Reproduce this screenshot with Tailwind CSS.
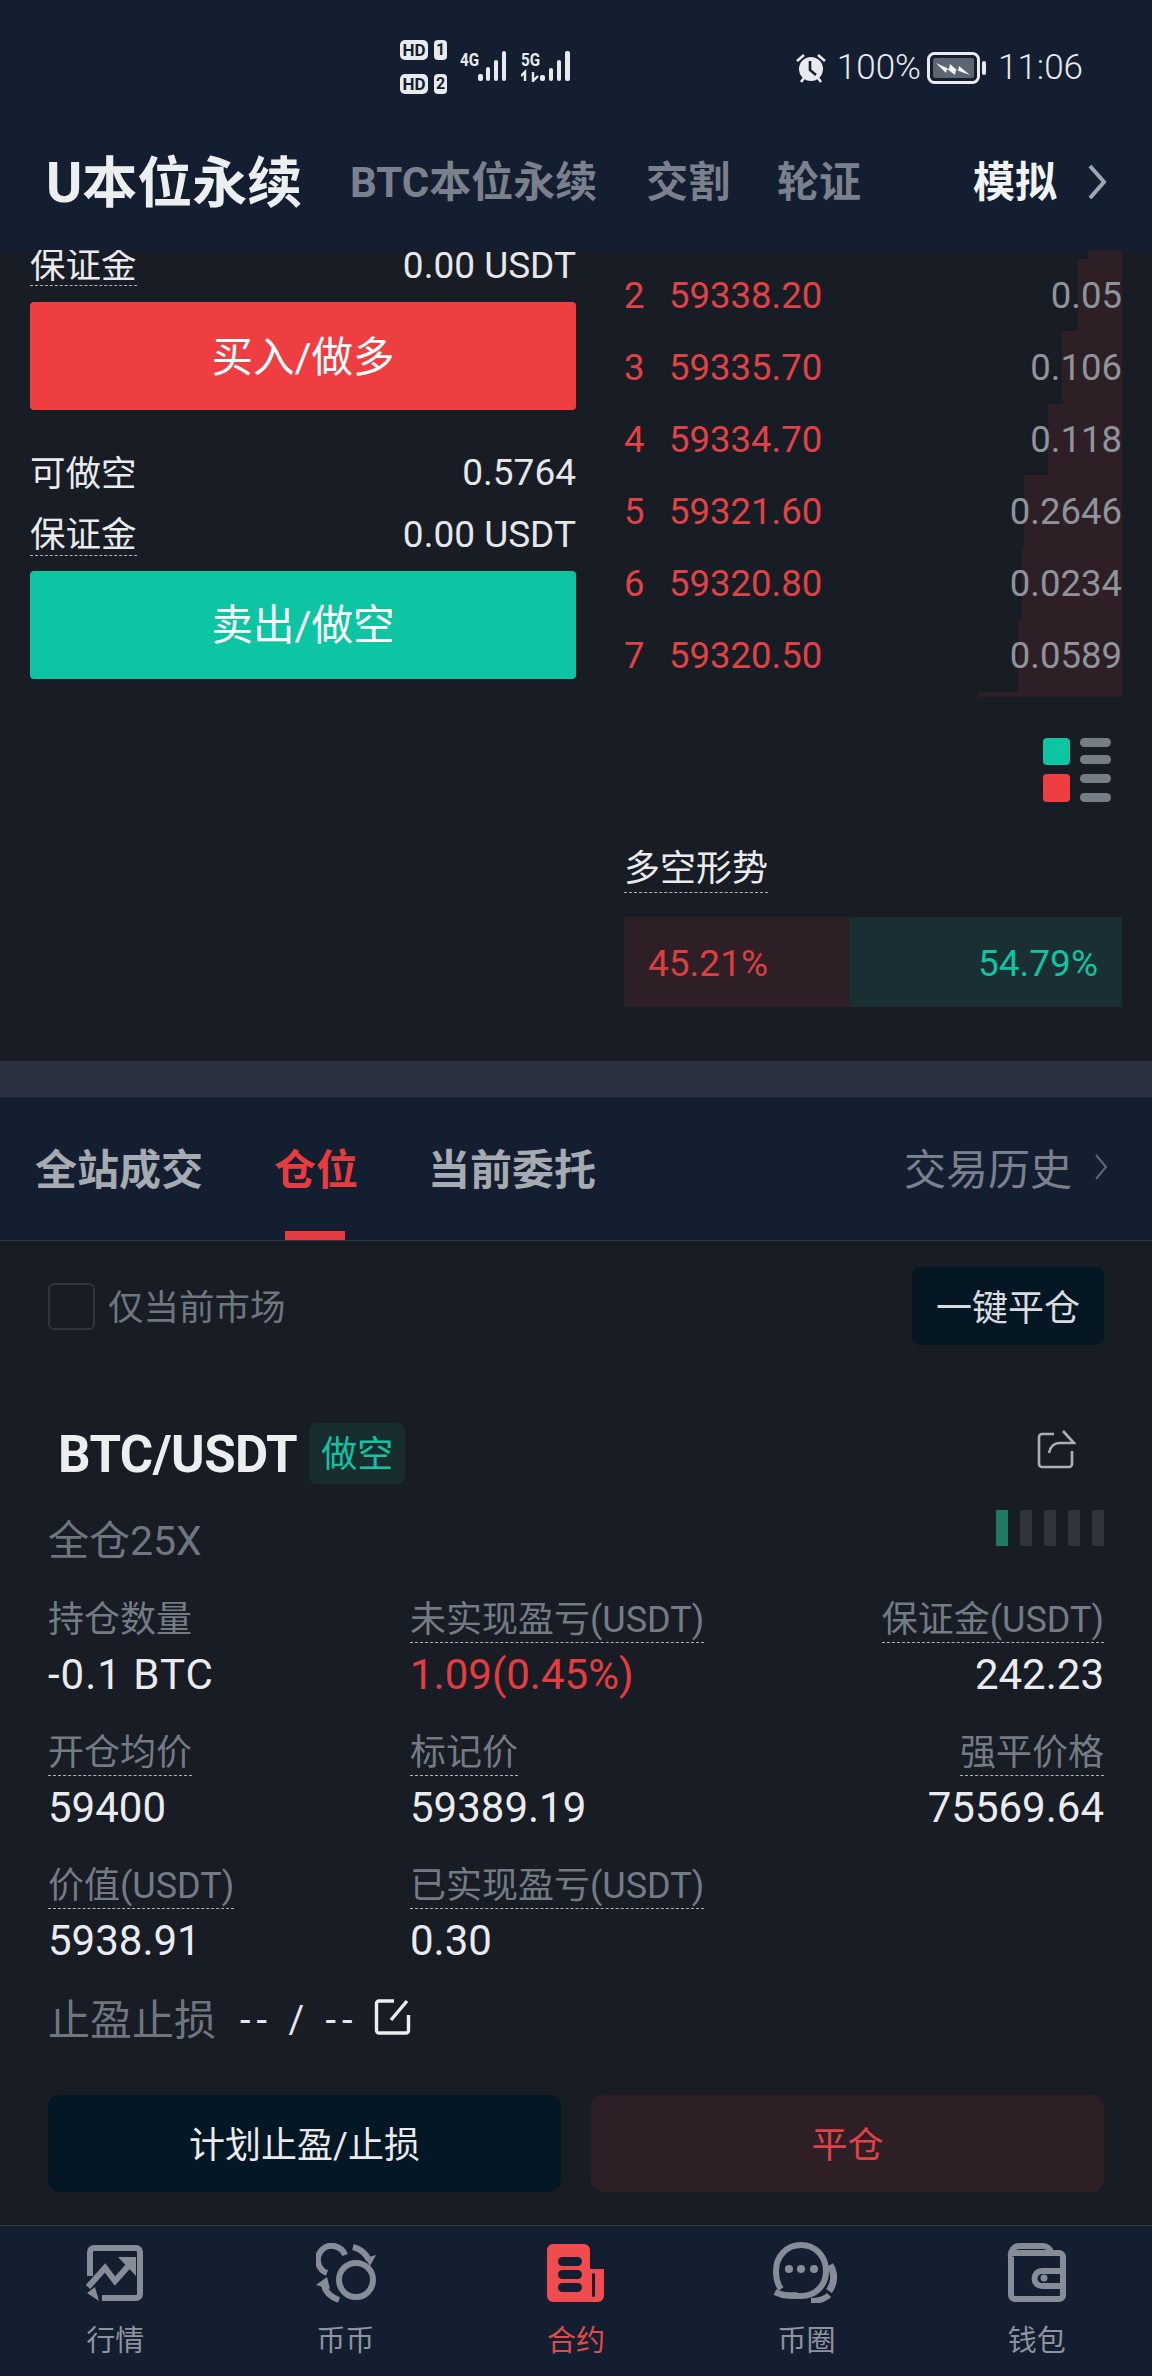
<!DOCTYPE html>
<html lang="zh-CN">
<head>
<meta charset="utf-8">
<title>U本位永续</title>
<script src="https://cdn.jsdelivr.net/npm/@tailwindcss/browser@4"></script>
</head>
<body class="m-0">
<div class="w-[1152px] h-[2376px] overflow-hidden flex flex-col bg-[#181c25] text-[#e9ebee] font-['Roboto','Noto_Sans_CJK_SC',sans-serif]">

  <!-- header -->
  <header class="h-[250px] shrink-0 bg-[#131f30] flex flex-col">
    <div class="h-[136px] relative">
      <div class="absolute left-[400px] top-[40px] flex gap-[6px]">
        <div class="flex flex-col gap-[14px]">
          <div class="flex gap-[6px]">
            <span class="w-[28px] h-[20px] rounded-[5px] bg-[#e8eaed] text-[#131f30] text-[17px] leading-[20px] font-bold text-center">HD</span>
            <span class="w-[13px] h-[20px] rounded-[4px] bg-[#e8eaed] text-[#131f30] text-[16px] leading-[20px] font-bold text-center">1</span>
          </div>
          <div class="flex gap-[6px]">
            <span class="w-[28px] h-[20px] rounded-[5px] bg-[#e8eaed] text-[#131f30] text-[17px] leading-[20px] font-bold text-center">HD</span>
            <span class="w-[13px] h-[20px] rounded-[4px] bg-[#e8eaed] text-[#131f30] text-[16px] leading-[20px] font-bold text-center">2</span>
          </div>
        </div>
        <div class="relative w-[60px] h-[54px]">
          <span class="absolute left-[7px] top-[10px] text-[19px] leading-[20px] font-bold text-[#e8eaed] scale-x-[.8] origin-left">4G</span>
          <svg class="absolute left-[25px] top-[10px]" width="34" height="32" viewBox="0 0 34 32" fill="#e8eaed"><rect x="0" y="24" width="5" height="7" rx="2"/><rect x="8" y="17" width="4" height="14" rx="2"/><rect x="16" y="10" width="4" height="21" rx="2"/><rect x="24" y="1" width="4" height="30" rx="2"/></svg>
        </div>
        <div class="relative w-[60px] h-[54px]">
          <span class="absolute left-[2px] top-[10px] text-[19px] leading-[20px] font-bold text-[#e8eaed] scale-x-[.8] origin-left">5G</span>
          <svg class="absolute left-[2px] top-[10px]" width="56" height="32" viewBox="0 0 56 32" fill="#e8eaed"><path d="M4 31V22L0 26M12 22V31L17 26" stroke="#e8eaed" stroke-width="2.4" fill="none"/><rect x="19" y="25" width="5" height="6" rx="2"/><rect x="28" y="18" width="4" height="13" rx="2"/><rect x="36" y="10" width="4" height="21" rx="2"/><rect x="44" y="1" width="5" height="30" rx="2"/></svg>
        </div>
      </div>
      <div class="absolute right-[69px] top-[49px] h-[38px] flex items-center text-[35px] leading-[38px] font-light text-[#e8eaed]">
        <svg width="32" height="32" viewBox="0 0 32 32" class="mr-[10px]"><path d="M2 9 9 3M30 9 23 3M6 30l3-4M26 30l-3-4" stroke="#e8eaed" stroke-width="2.6" fill="none"/><circle cx="16" cy="17" r="12" fill="#e8eaed"/><path d="M15 9v9l6 5" stroke="#131f30" stroke-width="2.6" fill="none"/></svg>
        <span>100%</span>
        <svg width="60" height="32" viewBox="0 0 60 32" class="ml-[6px] mr-[11px]"><rect x="1.5" y="1.5" width="50" height="29" rx="6" fill="none" stroke="#e8eaed" stroke-width="3"/><rect x="6" y="6" width="41" height="20" rx="2" fill="#5d6570"/><path d="M9 11l13 6 1-5 8 7 1-5 11 9-14-5-1 5-8-6-1 4z" fill="#f2f3f5"/><rect x="55" y="9" width="4" height="14" rx="2" fill="#e8eaed"/></svg>
        <span>11:06</span>
      </div>
    </div>
    <nav class="h-[92px] flex items-center relative pl-[46px] font-bold pt-[2px]">
      <span class="text-[55px] leading-[60px] text-[#eceef0] w-[304px]">U本位永续</span>
      <span class="text-[42px] leading-[60px] text-[#7a818c] w-[296px]">BTC本位永续</span>
      <span class="text-[42px] leading-[60px] text-[#7a818c] w-[131px]">交割</span>
      <span class="text-[42px] leading-[60px] text-[#7a818c] w-[196px]">轮证</span>
      <span class="text-[42px] leading-[60px] text-[#f2f3f5] w-[114px]">模拟</span>
      <svg width="20" height="40" viewBox="0 0 20 40" fill="none" stroke="#a0a6af" stroke-width="4" class="-mt-[3px]"><path d="M3 4 17 20 3 36"/></svg>
    </nav>
  </header>

  <!-- trade area -->
  <section class="h-[811px] shrink-0 relative overflow-hidden flex">
    <div class="w-[546px] ml-[30px] -mt-[4px]">
      <div class="flex justify-between items-center h-[40px]">
        <span class="text-[35.500px] leading-[38px] border-b border-dashed border-[#aeb3ba]">保证金</span><span class="text-[37px] text-[#e5e7ea]">0.00 USDT</span>
      </div>
      <div class="mt-[16px] pt-[4px] h-[108px] rounded-[4px] bg-[#ee3e42] flex items-center justify-center text-[41.500px] text-white">买入/做多</div>
      <div class="mt-[42px] flex justify-between items-center h-[42px]">
        <span class="text-[35.500px] pt-[3px]">可做空</span><span class="text-[37px] text-[#e5e7ea]">0.5764</span>
      </div>
      <div class="mt-[20px] flex justify-between items-center h-[42px]">
        <span class="text-[35.500px] leading-[39px] pt-[1px] border-b border-dashed border-[#aeb3ba]">保证金</span><span class="text-[37px] text-[#e5e7ea]">0.00 USDT</span>
      </div>
      <div class="mt-[15px] pt-[3px] h-[108px] rounded-[4px] bg-[#0dc4a3] flex items-center justify-center text-[41.500px] text-white">卖出/做空</div>
    </div>

    <div class="absolute left-0 top-0 w-full h-full pointer-events-none">
      <div class="absolute right-[30px] top-[1px] w-[34px] h-[8px] bg-[#2e1f27]"></div>
      <div class="absolute right-[30px] top-[9px] w-[44px] h-[72px] bg-[#2e1f27]"></div>
      <div class="absolute right-[30px] top-[81px] w-[60px] h-[73px] bg-[#2e1f27]"></div>
      <div class="absolute right-[30px] top-[154px] w-[74px] h-[71px] bg-[#2e1f27]"></div>
      <div class="absolute right-[30px] top-[225px] w-[98px] h-[71px] bg-[#2e1f27]"></div>
      <div class="absolute right-[30px] top-[296px] w-[100px] h-[73px] bg-[#2e1f27]"></div>
      <div class="absolute right-[30px] top-[369px] w-[104px] h-[73px] bg-[#2e1f27]"></div>
      <div class="absolute right-[30px] top-[442px] w-[143px] h-[5px] bg-[#2e1f27]"></div>
    </div>

    <div class="relative ml-[48px] w-[498px] flex flex-col">
      <div class="pt-[10px] text-[36.5px] leading-[72px] text-[#e04245]">
        <div class="flex"><span class="w-[45px]">2</span><span>59338.20</span><span class="ml-auto text-[#8f949b]">0.05</span></div>
        <div class="flex"><span class="w-[45px]">3</span><span>59335.70</span><span class="ml-auto text-[#8f949b]">0.106</span></div>
        <div class="flex"><span class="w-[45px]">4</span><span>59334.70</span><span class="ml-auto text-[#8f949b]">0.118</span></div>
        <div class="flex"><span class="w-[45px]">5</span><span>59321.60</span><span class="ml-auto text-[#8f949b]">0.2646</span></div>
        <div class="flex"><span class="w-[45px]">6</span><span>59320.80</span><span class="ml-auto text-[#8f949b]">0.0234</span></div>
        <div class="flex"><span class="w-[45px]">7</span><span>59320.50</span><span class="ml-auto text-[#8f949b]">0.0589</span></div>
      </div>
      <div class="mt-[46px] self-end mr-[11px] w-[68px] h-[64px] grid grid-cols-[27px_31px] gap-x-[10px] gap-y-[9px]">
        <span class="h-[27px] rounded-[4px] bg-[#0dc4a3]"></span>
        <span class="flex flex-col gap-[8px]"><i class="block h-[9px] rounded-full bg-[#767d87]"></i><i class="block h-[9px] rounded-full bg-[#767d87]"></i></span>
        <span class="h-[28px] rounded-[4px] bg-[#ee3e42]"></span>
        <span class="flex flex-col gap-[10px]"><i class="block h-[9px] rounded-full bg-[#767d87]"></i><i class="block h-[9px] rounded-full bg-[#767d87]"></i></span>
      </div>
      <div class="mt-[45px]">
        <span class="inline-block text-[36px] leading-[44px] pb-[1px] border-b border-dashed border-[#aeb3ba]">多空形势</span>
      </div>
      <div class="mt-[24px] h-[90px] flex text-[37px] leading-[94px]">
        <div class="w-[225px] bg-[#2e1f27] text-[#d9403f] pl-[24px]">45.21%</div>
        <div class="flex-1 bg-[#1a2f33] text-[#0dc4a3] pr-[24px] text-right">54.79%</div>
      </div>
    </div>
  </section>

  <div class="h-[36px] shrink-0 bg-[#2a3140]"></div>

  <!-- tabs -->
  <div class="h-[144px] shrink-0 bg-[#131f30] border-b border-[#2d3644] relative flex items-center pl-[35px] pt-[5px] text-[42px] leading-[56px] font-bold -mb-px">
    <span class="text-[#a6abb2] w-[239px]">全站成交</span>
    <span class="text-[#e63c3f] w-[154px]">仓位</span>
    <span class="text-[#a6abb2]">当前委托</span>
    <span class="ml-auto mr-[80px] font-normal text-[#7a818c]">交易历史</span>
    <svg width="14" height="28" viewBox="0 0 14 28" fill="none" stroke="#5f6671" stroke-width="2" class="absolute right-[44px] top-[56px]"><path d="M2 2 12 14 2 26"/></svg>
    <span class="absolute left-[285px] bottom-0 w-[60px] h-[9px] bg-[#e63c3f]"></span>
  </div>

  <!-- position -->
  <main class="flex-1 px-[48px] pt-[26px]">
    <div class="flex items-center justify-between h-[80px]">
      <label class="flex items-center">
        <span class="w-[47px] h-[47px] rounded-[6px] border-2 border-[#30343c] mr-[13px]"></span>
        <span class="text-[35.500px] text-[#6f7680] pt-[5px]">仅当前市场</span>
      </label>
      <span class="w-[192px] h-[78px] pt-[5px] rounded-[8px] bg-[#061724] flex items-center justify-center text-[36px] text-[#d9dce0]">一键平仓</span>
    </div>

    <div class="mt-[76px] flex items-center h-[62px] pl-[10px] relative">
      <span class="text-[51px] leading-[62px] font-bold tracking-[-0.5px] text-[#eceef0] pt-[4px]">BTC/USDT</span>
      <span class="ml-[12px] w-[96px] h-[61px] pt-[4px] rounded-[8px] bg-[#182d30] flex items-center justify-center text-[36px] text-[#0dc4a3]">做空</span>
      <svg class="absolute right-[28px] top-[8px]" width="40" height="40" viewBox="0 0 40 40" fill="none" stroke="#aab0b9" stroke-width="2.6"><path d="M18 4H6a3 3 0 0 0-3 3v27a3 3 0 0 0 3 3h27a3 3 0 0 0 3-3V21"/><path d="M27 1 38 13H24c-6 0-10 4-11 10"/></svg>
    </div>
    <div class="mt-[26px] flex items-center justify-between h-[56px]">
      <span class="text-[41px] leading-[56px] text-[#6f7680] pt-[6px]">全仓25X</span>
      <div class="flex gap-[12px] h-[36px] -mt-[20px]">
        <i class="w-[12px] bg-[#1f7a65]"></i><i class="w-[12px] bg-[#30343d]"></i><i class="w-[12px] bg-[#30343d]"></i><i class="w-[12px] bg-[#30343d]"></i><i class="w-[12px] bg-[#30343d]"></i>
      </div>
    </div>

    <div class="mt-[32px] grid grid-cols-[362px_1fr_auto] gap-y-[24px] text-[42px] leading-[64px]">
      <div class="flex flex-col items-start"><span class="text-[36px] leading-[45px] text-[#747b85]">持仓数量</span><span class="tracking-[1px]">-0.1 BTC</span></div>
      <div class="flex flex-col items-start"><span class="text-[36px] leading-[44px] text-[#747b85] border-b border-dashed border-[#aeb3ba]">未实现盈亏(USDT)</span><span class="text-[#e63c3f]">1.09(0.45%)</span></div>
      <div class="flex flex-col items-end"><span class="text-[36px] leading-[44px] text-[#747b85] border-b border-dashed border-[#aeb3ba]">保证金(USDT)</span><span>242.23</span></div>

      <div class="flex flex-col items-start"><span class="text-[36px] leading-[44px] text-[#747b85] border-b border-dashed border-[#aeb3ba]">开仓均价</span><span>59400</span></div>
      <div class="flex flex-col items-start"><span class="text-[36px] leading-[44px] text-[#747b85] border-b border-dashed border-[#aeb3ba]">标记价</span><span>59389.19</span></div>
      <div class="flex flex-col items-end"><span class="text-[36px] leading-[44px] text-[#747b85] border-b border-dashed border-[#aeb3ba]">强平价格</span><span>75569.64</span></div>

      <div class="flex flex-col items-start"><span class="text-[36px] leading-[44px] text-[#747b85] border-b border-dashed border-[#aeb3ba]">价值(USDT)</span><span>5938.91</span></div>
      <div class="flex flex-col items-start"><span class="text-[36px] leading-[44px] text-[#747b85] border-b border-dashed border-[#aeb3ba]">已实现盈亏(USDT)</span><span>0.30</span></div>
      <div></div>
    </div>

    <div class="mt-[19px] flex items-center h-[56px]">
      <span class="text-[42px] text-[#6f7680] w-[192px]">止盈止损</span>
      <span class="text-[38px] tracking-[6px] text-[#e5e7ea] w-[134px]">-- / --</span>
      <svg width="38" height="38" viewBox="0 0 38 38" fill="none" stroke="#eceef0" stroke-width="3.4" class="-mt-[6px]"><path d="M20 3H5a2.500 2.500 0 0 0-2.500 2.500v27A2.500 2.500 0 0 0 5 35h27a2.500 2.500 0 0 0 2.500-2.500V17"/><path d="M33 3 17 22"/></svg>
    </div>

    <div class="mt-[47px] grid grid-cols-2 gap-[30px] h-[97px] text-[36px]">
      <span class="rounded-[12px] pt-[5px] bg-[#041724] flex items-center justify-center text-[#e9ebee]">计划止盈/止损</span>
      <span class="rounded-[12px] pt-[5px] bg-[#2e1f27] flex items-center justify-center text-[#e04245]">平仓</span>
    </div>
  </main>

  <!-- bottom nav -->
  <footer class="h-[151px] shrink-0 bg-[#131f30] border-t border-[#333c49] grid grid-cols-5 text-[29px] leading-[36px] text-[#8d949e]">
    <div class="flex flex-col items-center pt-[17px]">
      <svg width="60" height="60" viewBox="0 0 60 60"><path d="M5 33V9a4 4 0 0 1 4-4h42a4 4 0 0 1 4 4v42a4 4 0 0 1-4 4H17" fill="none" stroke="#868d97" stroke-width="6"/><path d="M3 44 20 25 30 38 46 20" fill="none" stroke="#868d97" stroke-width="6"/><path d="M33 14H51V33Z" fill="#868d97"/><path d="M10 44 2 50 14 58Z" fill="#868d97"/></svg>
      <span class="mt-[20px]">行情</span>
    </div>
    <div class="flex flex-col items-center pt-[17px]">
      <svg width="60" height="60" viewBox="0 0 60 60" fill="none" stroke="#868d97" stroke-width="6"><circle cx="40" cy="37" r="17"/><path d="M29 12A14 14 0 1 0 11 30"/><path d="M37 4C45 6 50 11 53 17"/><path d="M49 15 60 12 54 23Z" fill="#868d97" stroke="none"/><path d="M8 42C9 49 15 54 23 57"/><path d="M0 42 11 34 14 46Z" fill="#868d97" stroke="none"/></svg>
      <span class="mt-[20px]">币币</span>
    </div>
    <div class="flex flex-col items-center pt-[17px] text-[#e04a4d]">
      <svg width="60" height="60" viewBox="0 0 60 60"><path d="M7 0H38a6 6 0 0 1 6 6V25H58V52a6 6 0 0 1-6 6H7a6 6 0 0 1-6-6V6a6 6 0 0 1 6-6Z" fill="#f04c50" transform="translate(0 1)"/><rect x="12" y="14" width="24" height="9" rx="4.500" fill="#131f30"/><rect x="12" y="27" width="24" height="9" rx="4.500" fill="#131f30"/><rect x="12" y="40" width="24" height="9" rx="4.500" fill="#131f30"/><rect x="46" y="30" width="3" height="24" rx="1.500" fill="#131f30"/></svg>
      <span class="mt-[20px]">合约</span>
    </div>
    <div class="flex flex-col items-center pt-[15px]">
      <svg width="66" height="62" viewBox="0 0 66 62" fill="none" stroke="#868d97" stroke-width="6"><path d="M8 48C4 43 3 37 3 30 3 15 14 4 28 4s25 11 25 26-11 25-25 25c-5 0-10 0-20-1"/><path d="M2 51C8 54 16 55 24 54" stroke-width="6"/><path d="M57 24C62 32 62 42 56 50" stroke-width="7"/><path d="M38 60C46 60 52 58 56 54" stroke-width="6"/><circle cx="16" cy="28" r="4" fill="#868d97" stroke="none"/><circle cx="28" cy="28" r="4" fill="#868d97" stroke="none"/><circle cx="41" cy="28" r="4" fill="#868d97" stroke="none"/></svg>
      <span class="mt-[20px]">币圈</span>
    </div>
    <div class="flex flex-col items-center pt-[17px]">
      <svg width="60" height="60" viewBox="0 0 60 60" fill="none" stroke="#868d97" stroke-width="6"><path d="M4 14V52a4 4 0 0 0 4 4H52a4 4 0 0 0 4-4V14a4 4 0 0 0-4-4H4"/><path d="M4 14a9 9 0 0 1 9-11H36a8 8 0 0 1 8 7"/><path d="M56 28H35a7 7 0 0 0 0 15H56"/><circle cx="37" cy="35" r="3.500" fill="#868d97" stroke="none"/></svg>
      <span class="mt-[20px]">钱包</span>
    </div>
  </footer>
</div>
</body>
</html>
